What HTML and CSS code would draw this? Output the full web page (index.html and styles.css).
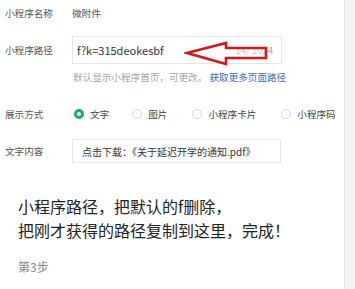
FILE: index.html
```html
<!DOCTYPE html>
<html lang="zh-CN">
<head>
    <meta charset="UTF-8">
    <meta name="viewport" content="width=device-width, initial-scale=1.0">
    <title>小程序设置</title>
    <link rel="stylesheet" href="styles.css">
</head>
<body>
    <div class="panel">
        <div class="form-row row-name">
            <span class="label">小程序名称</span>
            <span class="value">微附件</span>
        </div>
        <div class="form-row row-path">
            <span class="label">小程序路径</span>
            <div class="input path-input">
                <span class="input-text">f?k=315deokesbf</span>
                <span class="counter">14/ 1024</span>
                <svg class="arrow" width="90" height="28" viewBox="0 0 90 28">
                    <polygon points="3,14 42,4 42,9 82,9 82,19 42,19 42,25" fill="rgba(255,255,255,0.35)" stroke="#d9151b" stroke-width="2.6" stroke-linejoin="miter"/>
                </svg>
            </div>
        </div>
        <div class="hint">默认显示小程序首页，可更改。 <a class="link">获取更多页面路径</a></div>
        <div class="form-row row-mode">
            <span class="label">展示方式</span>
            <div class="radios">
                <span class="radio checked"><i></i>文字</span>
                <span class="radio"><i></i>图片</span>
                <span class="radio"><i></i>小程序卡片</span>
                <span class="radio"><i></i>小程序码</span>
            </div>
        </div>
        <div class="form-row row-text">
            <span class="label">文字内容</span>
            <div class="input text-input">点击下载：《关于延迟开学的通知.pdf》</div>
        </div>
        <div class="note">
            <p>小程序路径，把默认的f删除，</p>
            <p>把刚才获得的路径复制到这里，完成！</p>
        </div>
        <div class="step">第3步</div>
    </div>
</body>
</html>
```

FILE: styles.css
```css
body {
    margin: 0;
    background-color: #f4f4f4;
    font-family: "Noto Sans CJK SC", "Liberation Sans", sans-serif;
    color: #333;
}
.panel {
    width: 345px;
    height: 289px;
    background-color: #fff;
    border-right: 1px solid #e2e2e2;
    box-sizing: border-box;
    overflow: hidden;
}
.form-row {
    display: flex;
    align-items: center;
    padding-left: 5px;
}
.label {
    width: 67px;
    flex-shrink: 0;
    font-size: 9.6px;
    color: #555;
}
.row-name {
    height: 26px;
}
.value {
    font-size: 9.6px;
    color: #555;
}
.row-path {
    margin-top: 10px;
}
.input {
    box-sizing: border-box;
    border: 1px solid #e6e6e6;
    display: flex;
    align-items: center;
    background-color: #fff;
}
.path-input {
    position: relative;
    width: 210px;
    height: 28px;
    padding: 0 8px 0 4px;
}
.input-text {
    flex: 1;
    font-size: 11px;
    color: #333;
}
.counter {
    font-size: 9.6px;
    color: #aaa;
}
.arrow {
    position: absolute;
    left: 111px;
    top: 2px;
}
.hint {
    margin-top: 6px;
    padding-left: 73px;
    height: 14px;
    line-height: 14px;
    font-size: 9.6px;
    color: #a3a3a3;
    white-space: nowrap;
}
.link {
    color: #3c6cb4;
}
.row-mode {
    margin-top: 22px;
    height: 16px;
}
.radios {
    display: flex;
    align-items: center;
    padding-left: 2px;
    white-space: nowrap;
}
.radio {
    display: flex;
    align-items: center;
    flex-shrink: 0;
    font-size: 9.6px;
    color: #444;
    margin-right: 23px;
}
.radio:nth-child(2),
.radio:nth-child(3) {
    margin-right: 25px;
}
.radio i {
    width: 10px;
    height: 10px;
    box-sizing: border-box;
    border: 1px solid #d6d6d6;
    border-radius: 50%;
    margin-right: 6px;
}
.radio.checked i {
    border: 3px solid #1aad5e;
    background-color: #fff;
}
.row-text {
    margin-top: 17px;
}
.text-input {
    width: 209px;
    height: 24px;
    padding-left: 9px;
    font-size: 10px;
    color: #333;
    white-space: nowrap;
}
.note {
    margin-top: 31px;
    padding-left: 18px;
}
.note p {
    margin: 0;
    font-size: 16px;
    line-height: 24px;
    color: #222;
}
.step {
    margin-top: 17px;
    padding-left: 18px;
    font-size: 12px;
    line-height: 16px;
    color: #888;
}
```
